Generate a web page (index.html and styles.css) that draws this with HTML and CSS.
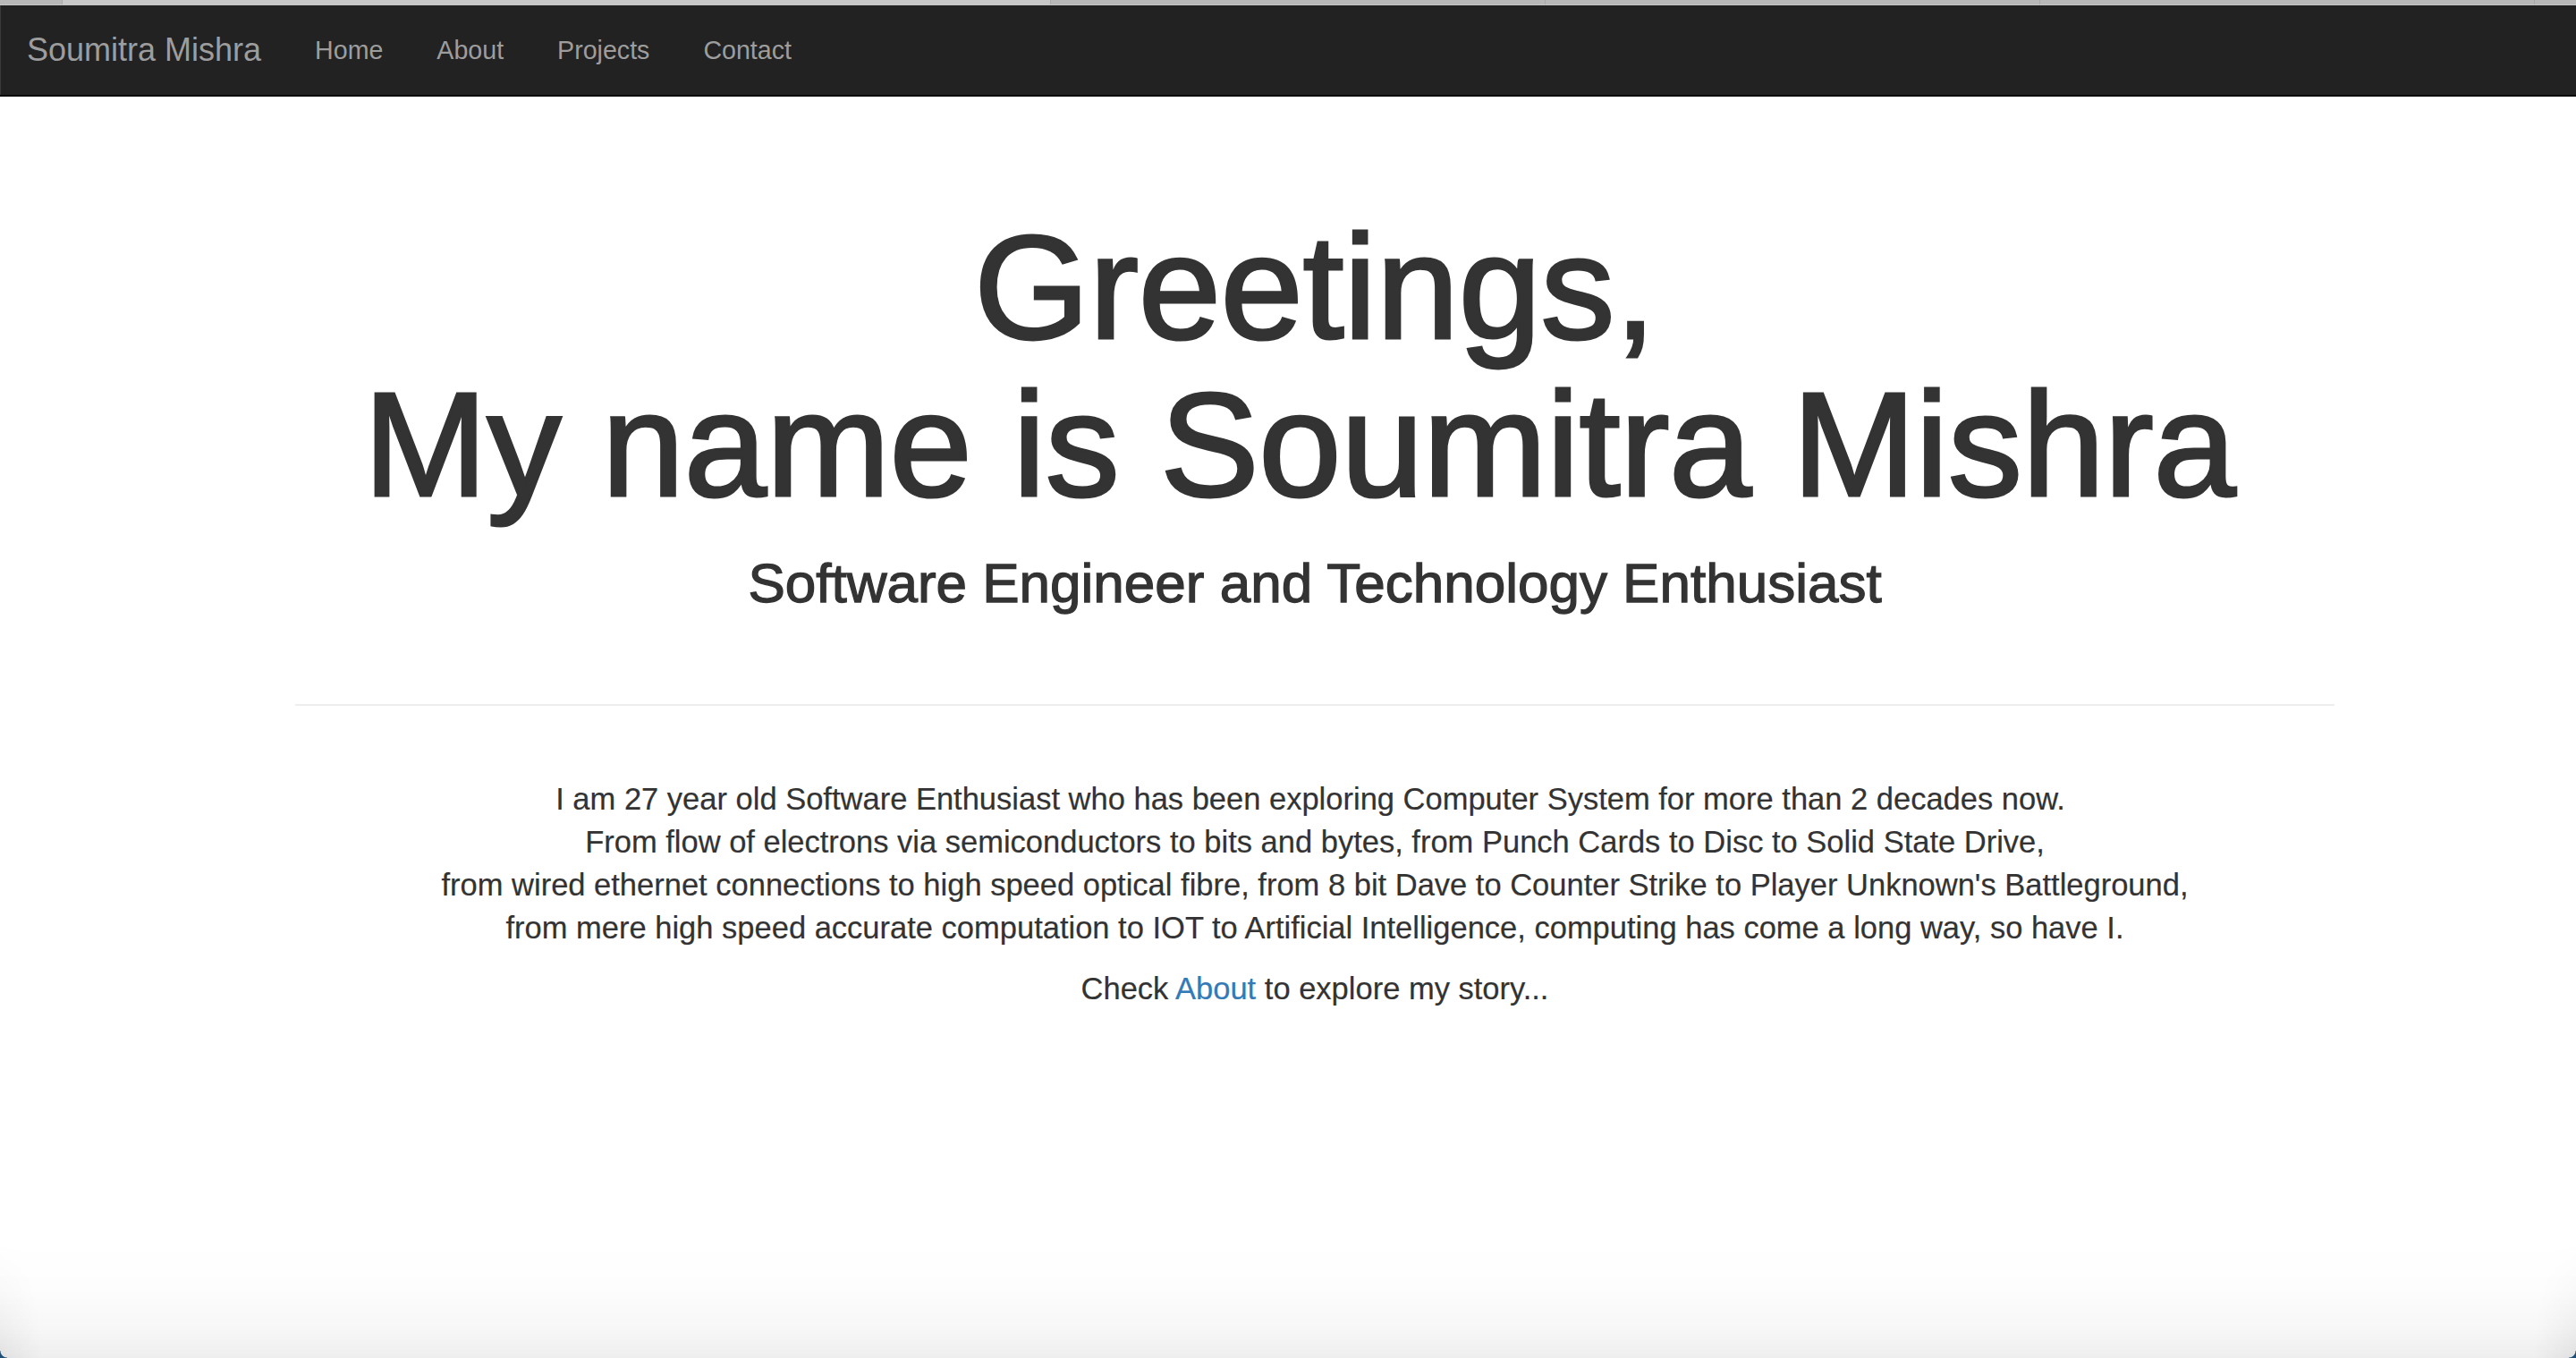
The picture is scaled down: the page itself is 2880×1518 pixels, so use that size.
FILE: index.html
```html
<!DOCTYPE html>
<html lang="en">
<head>
<meta charset="utf-8">
<title>Soumitra Mishra</title>
<link rel="stylesheet" href="styles.css">
</head>
<body>
<div class="tabstrip">
  <div class="tab tab-edge"></div>
  <div class="tab tab-active"></div>
  <div class="tab"></div>
  <div class="tab"></div>
  <div class="tab"></div>
  <div class="tab tab-rest"></div>
</div>
<nav class="navbar">
  <a class="brand" href="#">Soumitra Mishra</a>
  <ul class="nav">
    <li><a href="#">Home</a></li>
    <li><a href="#">About</a></li>
    <li><a href="#">Projects</a></li>
    <li><a href="#">Contact</a></li>
  </ul>
</nav>
<main class="container">
  <h1 class="title">Greetings,<br><span class="title-trail">My name is Soumitra Mishra</span></h1>
  <h2 class="subtitle">Software Engineer and Technology Enthusiast</h2>
  <hr class="divider">
  <p class="intro"><span class="trail">I am 27 year old Software Enthusiast who has been exploring Computer System for more than 2 decades now.</span><br>From flow of electrons via semiconductors to bits and bytes, from Punch Cards to Disc to Solid State Drive,<br>from wired ethernet connections to high speed optical fibre, from 8 bit Dave to Counter Strike to Player Unknown's Battleground,<br>from mere high speed accurate computation to IOT to Artificial Intelligence, computing has come a long way, so have I.</p>
  <p class="intro">Check <a class="link" href="#">About</a> to explore my story...</p>
</main>
<div class="bottom-fade"></div>
<div class="corner corner-left"></div>
<div class="corner corner-right"></div>
</body>
</html>
```
FILE: styles.css
```css
html, body {
  margin: 0;
  padding: 0;
}
body {
  background: #fff;
  color: #333;
  font-family: "Liberation Sans", Arial, Helvetica, sans-serif;
  height: 1518px;
  overflow: hidden;
}
.tabstrip {
  display: flex;
  height: 5px;
  background: #b8b8b8;
  border-bottom: 1px solid #c6c6c6;
}
.tab {
  width: 552px;
  border-right: 1px solid #a9a9a9;
  background: #b8b8b8;
}
.tab-edge {
  width: 69px;
}
.tab-active {
  width: 1104px;
  background: #c8c8c8;
}
.tab-rest {
  flex: 1;
  border-right: none;
}
.navbar {
  display: flex;
  align-items: center;
  height: 100px;
  background: #222;
  border-bottom: 2px solid #080808;
  box-shadow: inset 1px 0 0 #3a3a3a;
}
.brand {
  padding: 0 30px;
  font-size: 36px;
  line-height: 100px;
  color: #9d9d9d;
  text-decoration: none;
}
.nav {
  display: flex;
  margin: 0;
  padding: 0;
  list-style: none;
}
.nav a {
  display: block;
  padding: 0 30px;
  font-size: 28.6px;
  line-height: 100px;
  color: #9d9d9d;
  text-decoration: none;
}
.container {
  width: 2280px;
  margin-left: calc(50% - 1110px);
  text-align: center;
}
.title {
  margin: 125px 0 0;
  font-size: 166px;
  line-height: 176px;
  font-weight: 500;
  color: #333;
  letter-spacing: -0.4px;
  -webkit-text-stroke: 3px #333;
}
.title-trail {
  margin-right: 34px;
}
.subtitle {
  margin: 33px 0 0;
  font-size: 62px;
  line-height: 68px;
  font-weight: 500;
  color: #333;
  -webkit-text-stroke: 1.3px #333;
}
.divider {
  margin: 101px 0 0;
  border: 0;
  border-top: 2px solid #eee;
  height: 0;
}
.intro {
  margin: 0 0 20px;
  font-size: 34.5px;
  line-height: 48px;
  -webkit-text-stroke: 0.2px #333;
}
.trail {
  margin-right: 10px;
}
.divider + .intro {
  margin-top: 80px;
}
.link {
  color: #337ab7;
  text-decoration: none;
  -webkit-text-stroke: 0.2px #337ab7;
}
.bottom-fade {
  position: fixed;
  left: 0;
  right: 0;
  bottom: 0;
  height: 130px;
  background: linear-gradient(to bottom, rgba(0,0,0,0) 0%, rgba(0,0,0,0.008) 40%, rgba(0,0,0,0.03) 75%, rgba(0,0,0,0.065) 100%);
  pointer-events: none;
}
.bottom-fade::before,
.bottom-fade::after {
  content: "";
  position: absolute;
  bottom: 0;
  width: 50px;
  height: 130px;
  -webkit-mask-image: linear-gradient(to bottom, transparent 0%, rgba(0,0,0,0.4) 50%, #000 100%);
  mask-image: linear-gradient(to bottom, transparent 0%, rgba(0,0,0,0.4) 50%, #000 100%);
}
.bottom-fade::before {
  left: 0;
  background: linear-gradient(to right, rgba(0,0,0,0.06), rgba(0,0,0,0));
}
.bottom-fade::after {
  right: 0;
  background: linear-gradient(to left, rgba(0,0,0,0.06), rgba(0,0,0,0));
}
.corner {
  position: fixed;
  bottom: 0;
  width: 8px;
  height: 8px;
}
.corner-left {
  left: 0;
  background: radial-gradient(circle at 100% 0%, rgba(0,0,0,0) 7px, #1d4f78 8px);
}
.corner-right {
  right: 0;
  background: radial-gradient(circle at 0% 0%, rgba(0,0,0,0) 7px, #1d4f78 8px);
}
```
